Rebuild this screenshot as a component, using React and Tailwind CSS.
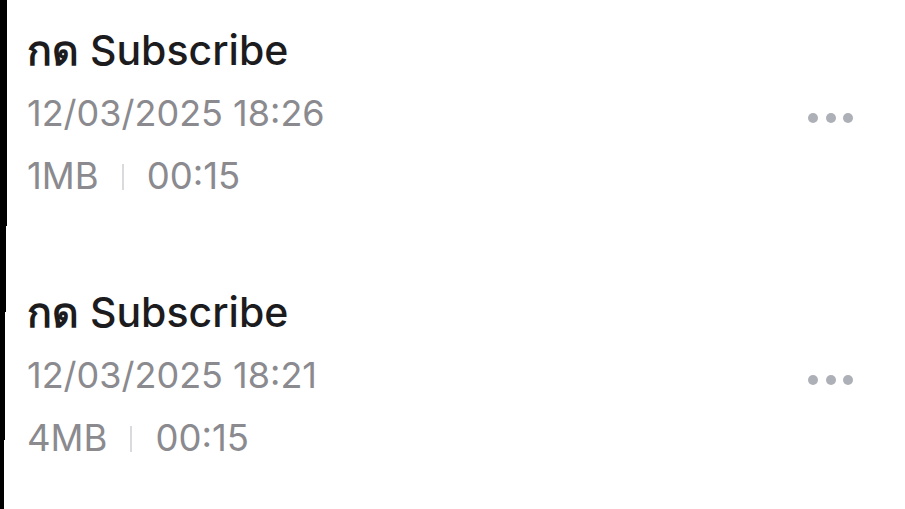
import React from 'react';

const recordings = [
  { prefix: 'กด', title: 'Subscribe', date: '12/03/2025 18:26', size: '1MB', length: '00:15' },
  { prefix: 'กด', title: 'Subscribe', date: '12/03/2025 18:21', size: '4MB', length: '00:15' },
];

const font = { fontFamily: 'Inter, "Noto Sans", "DejaVu Sans", sans-serif' };

const MoreDots = () => (
  <div className="flex items-center gap-[7.5px]">
    <span className="w-[10px] h-[10px] rounded-full bg-[#adb0b7]" />
    <span className="w-[10px] h-[10px] rounded-full bg-[#adb0b7]" />
    <span className="w-[10px] h-[10px] rounded-full bg-[#adb0b7]" />
  </div>
);

const RecordingRow = ({ item }) => (
  <div className="flex items-center pr-[52px]">
    <div className="flex-1 flex flex-col">
      <div className="h-[63px] leading-[63px] text-[41px] font-medium text-[#1c1c1e]">
        {/* thai fallback font has no medium weight, so push it to semibold */}
        <span className="font-semibold">{item.prefix}</span> {item.title}
      </div>
      <div className="h-[63px] leading-[63px] text-[36px] text-[#8a8a8f]">{item.date}</div>
      <div className="h-[63px] leading-[63px] text-[36.5px] text-[#8a8a8f] flex items-center">
        <span>{item.size}</span>
        <span className="mx-[23px] w-[2px] h-[26px] bg-[#dadade]" />
        <span>{item.length}</span>
      </div>
    </div>
    <div className="mt-[9px]">
      <MoreDots />
    </div>
  </div>
);

export default function App() {
  return (
    <div className="flex w-[905px] h-[509px] overflow-hidden bg-white" style={font}>
      <div className="flex flex-col">
        <div className="w-[7px] h-[226px] bg-black" />
        <div className="w-[6px] h-[86px] bg-black" />
        <div className="w-[5px] h-[128px] bg-black" />
        <div className="w-[4px] h-[69px] bg-black" />
      </div>
      <div className="flex-1 flex flex-col gap-[73px] pt-[19px] pl-[20px]">
        {recordings.map((item, i) => (
          <RecordingRow key={i} item={item} />
        ))}
      </div>
    </div>
  );
}
